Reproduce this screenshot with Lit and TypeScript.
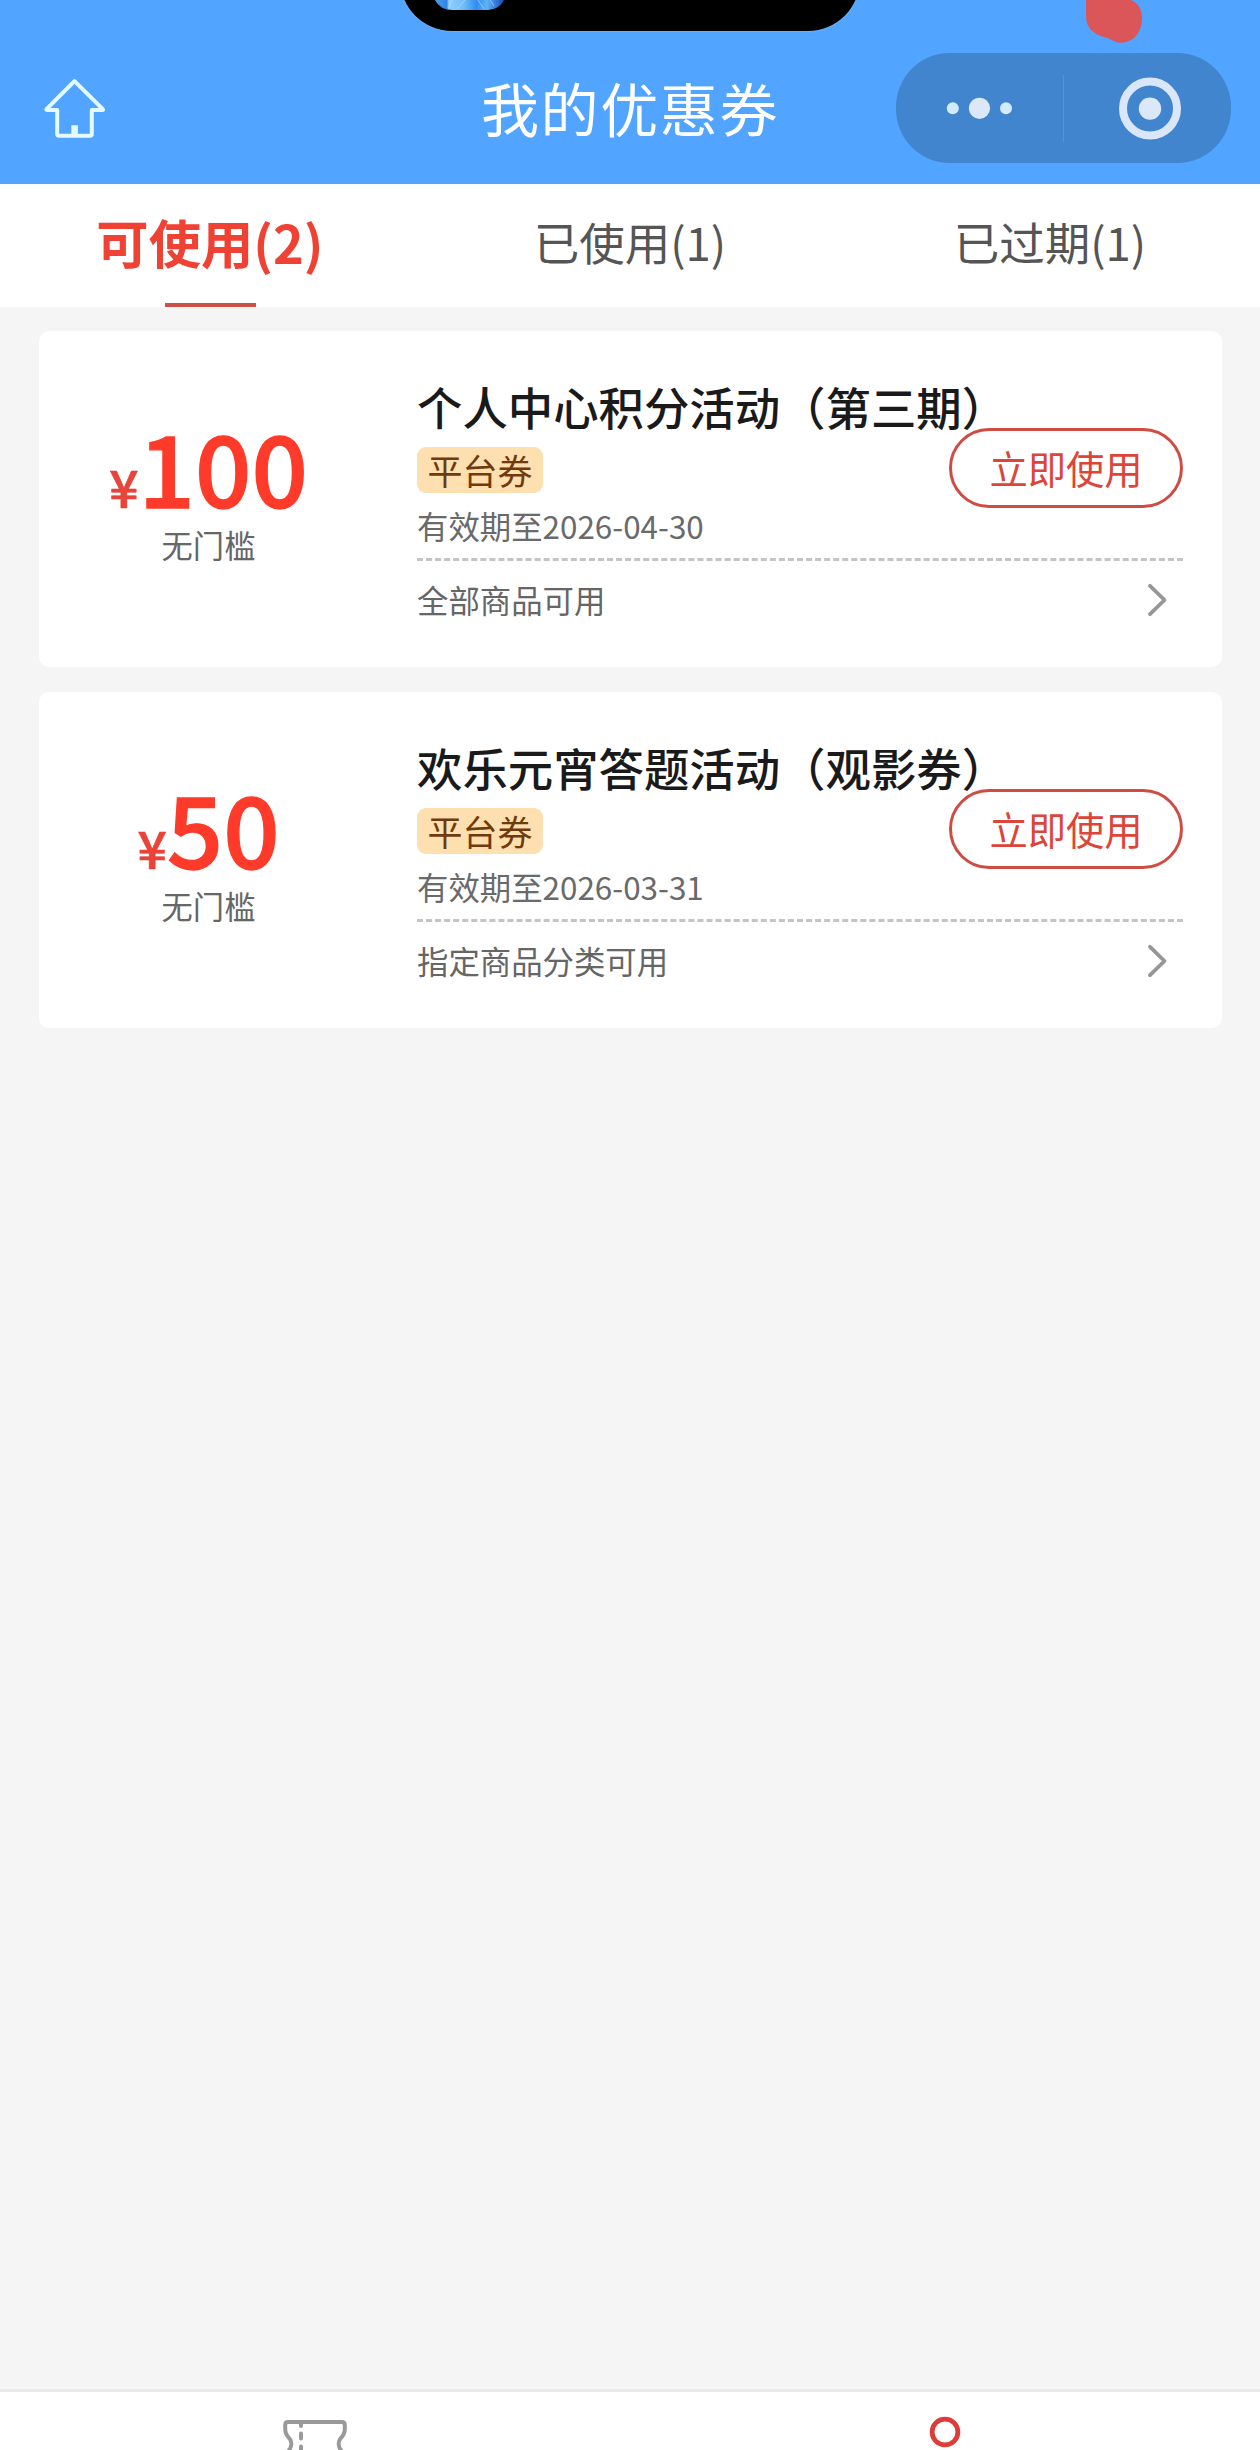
import { LitElement, html, css } from "lit";
import { customElement, property, state } from "lit/decorators.js";
import { classMap } from "lit/directives/class-map.js";

interface Coupon {
  amount: string;
  limit: string;
  title: string;
  tag: string;
  expiry: string;
  scope: string;
}

const COUPONS: Coupon[] = [
  {
    amount: "100",
    limit: "无门槛",
    title: "个人中心积分活动（第三期）",
    tag: "平台券",
    expiry: "有效期至2026-04-30",
    scope: "全部商品可用",
  },
  {
    amount: "50",
    limit: "无门槛",
    title: "欢乐元宵答题活动（观影券）",
    tag: "平台券",
    expiry: "有效期至2026-03-31",
    scope: "指定商品分类可用",
  },
];

const TABS = ["可使用(2)", "已使用(1)", "已过期(1)"];

@customElement("nav-header")
class NavHeader extends LitElement {
  static styles = css`
    :host {
      display: block;
    }
    .bar {
      position: relative;
      box-sizing: border-box;
      height: 184px;
      padding: 53px 29px 0 41px;
      display: grid;
      grid-template-columns: 1fr auto 1fr;
      align-items: start;
      background: #51a4ff;
      overflow: hidden;
    }
    .home {
      margin-top: 23px;
      display: block;
    }
    .title {
      margin: 1px 0 0;
      font-size: 58px;
      font-weight: 400;
      letter-spacing: 1.6px;
      line-height: 107px;
      color: #fff;
      transform: translateX(-6px);
    }
    .capsule {
      justify-self: end;
      display: block;
    }
    .island {
      position: absolute;
      left: 400px;
      top: -73px;
      width: 460px;
      height: 104px;
      border-radius: 52px;
      background: #000;
      box-shadow: 0 0 2px #9cc6f5;
    }
    .avatar {
      position: absolute;
      left: 432px;
      top: 0;
    }
    .blob {
      position: absolute;
      left: 1084px;
      top: 0;
    }
  `;

  render() {
    return html`
      <header class="bar">
        <svg class="home" width="68" height="64" viewBox="41 76 68 64">
          <path
            d="M74.5 81.2 L46.5 109.2 Q46 110 47 110 H57.2 V134 Q57.2 135.8 59 135.8 H90 Q91.8 135.8 91.8 134 V110 H102.5 Q103.5 110 102.8 109.2 Z"
            fill="none" stroke="#e4fbff" stroke-width="4" stroke-linejoin="round"
          />
          <rect x="71.3" y="125.3" width="6.6" height="10" fill="#e4fbff" />
        </svg>
        <h1 class="title">我的优惠券</h1>
        <svg class="capsule" width="335" height="110" viewBox="0 0 335 110">
          <rect width="335" height="110" rx="54" fill="#4085cd" />
          <circle cx="56.8" cy="55.3" r="6" fill="#d3ebff" />
          <circle cx="83.5" cy="55.3" r="10.6" fill="#dce7f7" />
          <circle cx="110" cy="55.3" r="6" fill="#d3ebff" />
          <rect x="167" y="22" width="1" height="67" fill="#5193dc" />
          <circle cx="254" cy="55.6" r="27" fill="none" stroke="#dae7fa" stroke-width="8" />
          <circle cx="254" cy="55.6" r="11.2" fill="#dce7f7" />
        </svg>
        <div class="island"></div>
        <svg class="avatar" width="76" height="12" viewBox="0 0 76 12">
          <defs>
            <linearGradient id="sky" x1="0" x2="1">
              <stop offset="0" stop-color="#4d9ff0" />
              <stop offset="0.17" stop-color="#2f83e6" />
              <stop offset="0.2" stop-color="#8fd0fb" />
              <stop offset="0.42" stop-color="#6fbcf8" />
              <stop offset="0.6" stop-color="#2f8cf0" />
              <stop offset="0.75" stop-color="#5fb2f8" />
              <stop offset="1" stop-color="#0f4bb8" />
            </linearGradient>
          </defs>
          <path d="M3 0 Q8 10 21 10 H56 Q68 9 72 0 Z" fill="url(#sky)" />
          <path d="M20 0 L17 8 M33 0 L25 9 M46 0 L52 9 M58 0 L62 6" stroke="#b9e4ff" stroke-width="1" stroke-opacity="0.6" fill="none" />
        </svg>
        <svg class="blob" width="60" height="46" viewBox="1084 0 60 46">
          <path
            d="M1086 0 V17 C1086 29 1096 36 1108 38 C1114 42 1119 43.5 1124 42.5 C1135 41 1142 31 1142 18 C1142 9 1138 3 1131 0 Z"
            fill="#db5659"
          />
        </svg>
      </header>
    `;
  }
}

@customElement("tab-strip")
class TabStrip extends LitElement {
  @property({ type: Array }) tabs: string[] = [];
  @state() private active = 0;

  static styles = css`
    :host {
      display: block;
    }
    .tabs {
      display: grid;
      grid-template-columns: repeat(3, 1fr);
      height: 123px;
      background: #fff;
    }
    .tab {
      display: flex;
      flex-direction: column;
      align-items: center;
      justify-content: space-between;
      font-size: 45.5px;
      color: #555;
      cursor: pointer;
    }
    .label {
      line-height: 115px;
    }
    .active {
      font-size: 52.3px;
      font-weight: 700;
      color: #f04234;
    }
    .line {
      width: 91px;
      height: 4px;
    }
    .active .line {
      background: #cb5046;
    }
  `;

  render() {
    return html`
      <nav class="tabs">
        ${this.tabs.map(
          (label, i) => html`
            <div
              class=${classMap({ tab: true, active: i === this.active })}
              @click=${() => (this.active = i)}
            >
              <span class="label">${label}</span>
              <span class="line"></span>
            </div>
          `
        )}
      </nav>
    `;
  }
}

@customElement("coupon-card")
class CouponCard extends LitElement {
  @property({ type: Object }) coupon!: Coupon;

  static styles = css`
    :host {
      display: block;
    }
    .card {
      box-sizing: border-box;
      height: 336px;
      padding-right: 39px;
      display: grid;
      grid-template-columns: 378px 1fr;
      background: #fff;
      border-radius: 10px;
    }
    .value {
      box-sizing: border-box;
      padding: 84px 39px 0 0;
      display: flex;
      flex-direction: column;
      align-items: center;
    }
    .price {
      height: 109px;
      display: flex;
      align-items: baseline;
      line-height: 100px;
      font-weight: 500;
      color: #fe3b2a;
    }
    .yen {
      font-size: 51.5px;
      color: #e8443a;
      -webkit-text-stroke: 0.7px #e8443a;
    }
    .number {
      font-size: 99px;
      -webkit-text-stroke: 1.3px #fe3b2a;
    }
    .limit {
      font-size: 31.3px;
      line-height: 42px;
      color: #666;
    }
    .info {
      display: flex;
      flex-direction: column;
    }
    .top {
      box-sizing: border-box;
      position: relative;
      height: 230px;
      padding-top: 48px;
      border-bottom: 3px dashed #c4c4c4;
      display: flex;
      flex-direction: column;
      align-items: flex-start;
    }
    .name {
      margin: 0;
      font-size: 45.4px;
      font-weight: 500;
      line-height: 54px;
      color: #1a1a1a;
      white-space: nowrap;
    }
    .tag {
      margin-top: 14px;
      padding: 0 10.5px;
      border-radius: 9px;
      font-size: 35px;
      line-height: 46px;
      color: #713a0c;
      background: #fddfb0;
    }
    .expiry {
      margin-top: 12px;
      font-size: 31.4px;
      line-height: 42px;
      color: #6a6a6a;
    }
    .use {
      position: absolute;
      right: 0;
      top: 97px;
      box-sizing: border-box;
      width: 234px;
      height: 80px;
      padding: 0;
      border: 3px solid #cf4c43;
      border-radius: 40px;
      background: transparent;
      font-family: inherit;
      font-size: 38.3px;
      line-height: 72px;
      text-align: center;
      color: #dc4539;
    }
    .scope {
      height: 76px;
      padding-right: 15px;
      display: flex;
      align-items: center;
      justify-content: space-between;
      font-size: 31.4px;
      color: #666;
    }
    .chevron {
      display: block;
      margin-top: 2px;
    }
  `;

  render() {
    const c = this.coupon;
    return html`
      <article class="card">
        <div class="value">
          <div class="price"><span class="yen">¥</span><span class="number">${c.amount}</span></div>
          <div class="limit">${c.limit}</div>
        </div>
        <div class="info">
          <div class="top">
            <h2 class="name">${c.title}</h2>
            <span class="tag">${c.tag}</span>
            <span class="expiry">${c.expiry}</span>
            <button class="use">立即使用</button>
          </div>
          <div class="scope">
            <span>${c.scope}</span>
            <svg class="chevron" width="22" height="34" viewBox="0 0 22 34">
              <path
                d="M4 2.8 L18.5 17 L4 31.2"
                fill="none" stroke="#969696" stroke-width="3.8" stroke-linecap="round" stroke-linejoin="round"
              />
            </svg>
          </div>
        </div>
      </article>
    `;
  }
}

@customElement("bottom-bar")
class BottomBar extends LitElement {
  static styles = css`
    :host {
      display: block;
    }
    .bar {
      box-sizing: border-box;
      height: 61px;
      border-top: 3px solid #e9e9e9;
      background: #fff;
      display: grid;
      grid-template-columns: 1fr 1fr;
      justify-items: center;
      overflow: hidden;
    }
    .icon {
      display: block;
      overflow: hidden;
    }
  `;

  render() {
    return html`
      <footer class="bar">
        <svg class="icon" width="80" height="58" viewBox="275 2392 80 58">
          <path
            d="M288.5 2451 C292 2446.5 292 2441.5 289.5 2438.5 C286 2435 285.2 2433 285.2 2429 V2425 Q285.2 2422 288.2 2422 H341.8 Q344.8 2422 344.8 2425 V2429 C344.8 2433 344 2435 340.5 2438.5 C338 2441.5 338 2446.5 341.5 2451"
            fill="none" stroke="#999" stroke-width="4"
          />
          <path d="M301 2422 V2426 M301 2433.5 V2438.5 M301 2446.5 V2452" stroke="#999" stroke-width="4" stroke-linecap="round" />
        </svg>
        <svg class="icon" width="80" height="58" viewBox="905 2392 80 58">
          <circle cx="945" cy="2432" r="12.9" fill="none" stroke="#dc3d38" stroke-width="4.8" />
        </svg>
      </footer>
    `;
  }
}

@customElement("app-root")
class AppRoot extends LitElement {
  static styles = css`
    :host {
      display: block;
      font-family: "Noto Sans CJK SC", sans-serif;
    }
    .page {
      width: 1260px;
      height: 2450px;
      display: flex;
      flex-direction: column;
      background: #f5f5f5;
      overflow: hidden;
    }
    .list {
      flex: 1;
      padding: 24px 38px 0 39px;
      display: flex;
      flex-direction: column;
      gap: 25px;
    }
  `;

  render() {
    return html`
      <div class="page">
        <nav-header></nav-header>
        <tab-strip .tabs=${TABS}></tab-strip>
        <main class="list">
          ${COUPONS.map((c) => html`<coupon-card .coupon=${c}></coupon-card>`)}
        </main>
        <bottom-bar></bottom-bar>
      </div>
    `;
  }
}
